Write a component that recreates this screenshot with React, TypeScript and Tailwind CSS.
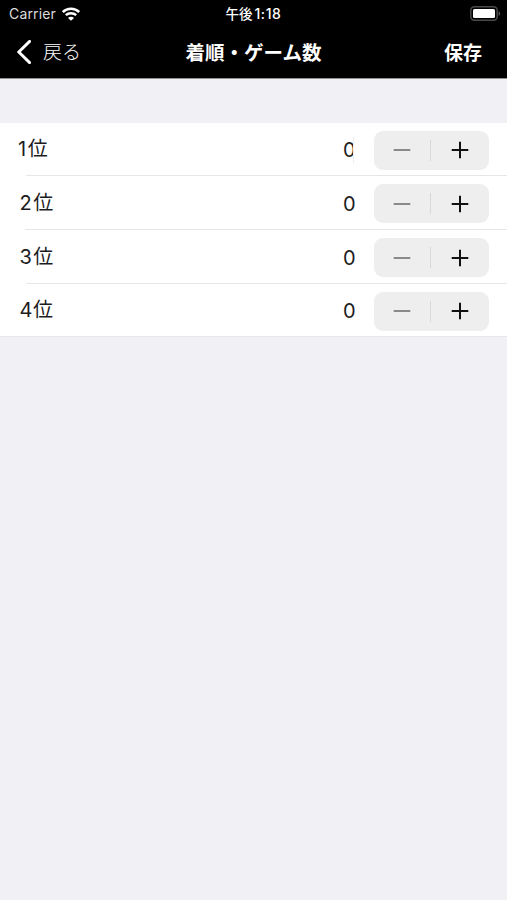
type Rank = {
  label: string;
  count: number;
  rowClass: string;
  labelClass: string;
  lineClass: string;
  clipped?: boolean;
};

const ranks: Rank[] = [
  { label: "1", count: 0, rowClass: "h-[53px]", labelClass: "pl-[18px] gap-[1.5px]", lineClass: "ml-[26px]", clipped: true },
  { label: "2", count: 0, rowClass: "h-[54px]", labelClass: "pl-[19.5px] gap-[1.5px]", lineClass: "ml-[25px]" },
  { label: "3", count: 0, rowClass: "h-[54px]", labelClass: "pl-[19.5px] gap-[1.5px]", lineClass: "ml-[26px]" },
  { label: "4", count: 0, rowClass: "h-[53px]", labelClass: "pl-[19.5px] gap-[0.5px]", lineClass: "ml-0" },
];

function StatusBar() {
  return (
    <div className="h-[26px] flex items-center justify-between pl-[9px] pr-[6px] text-white">
      <div className="w-[160px] flex items-center gap-[6px] pt-px">
        <span className="text-[14px] leading-[20px] tracking-[0.15px] text-[#dcdcdc]">Carrier</span>
        <svg className="w-[18px] h-[14px]" viewBox="0 0 18 14" fill="none" stroke="currentColor">
          <path d="M0.8 5C5.2 0.6 12.8 0.6 17.2 5" strokeWidth="2.6" />
          <path d="M3.8 8.2C6.6 5.5 11.4 5.5 14.2 8.2" strokeWidth="2.4" />
          <path d="M9 13.8L6 10.9C7.8 9.4 10.2 9.4 12 10.9Z" fill="currentColor" stroke="none" />
        </svg>
      </div>
      <div className="flex items-center gap-[2px] pr-[3px] pt-px font-medium leading-[20px]">
        <span className="text-[13.5px]">午後</span>
        <span className="text-[14px] tracking-[0.6px]">1:18</span>
      </div>
      <div className="w-[160px] flex justify-end">
        <svg className="w-[31px] h-[15px]" viewBox="0 0 31 15">
          <rect x="0.8" y="0.8" width="26.4" height="13.4" rx="3.6" fill="none" stroke="#4a4a4a" strokeWidth="1.5" />
          <rect x="3" y="3" width="22" height="9" rx="1.5" fill="#fff" />
          <path d="M28.6 5.2C30.6 6 30.6 9 28.6 9.8Z" fill="#5a5a5a" />
        </svg>
      </div>
    </div>
  );
}

function NavBar() {
  return (
    <div className="h-[53px] flex items-center justify-between pl-[17px] pr-[25px] border-b border-[#8e8e90] text-white">
      <button className="w-[120px] flex items-center gap-[12px]">
        <svg className="w-[14px] h-[24px]" viewBox="0 0 14 24" fill="none" stroke="currentColor">
          <path d="M12.6 1.4L1.8 12L12.6 22.6" strokeWidth="2.9" strokeLinecap="round" />
        </svg>
        <span className="pt-[2px] text-[19px] leading-[28px] font-light">戻る</span>
      </button>
      <h1 className="pt-[2px] text-[19.5px] leading-[28px] font-bold whitespace-nowrap">着順・ゲーム数</h1>
      <button className="w-[112px] pt-[3px] text-right text-[19px] leading-[28px] font-bold">保存</button>
    </div>
  );
}

function Stepper() {
  return (
    <div className="w-[115px] h-[39px] flex items-center rounded-[9px] bg-[#eeeeee]">
      <button className="w-[56px] flex justify-center text-[#8a8a8b]">
        <svg className="w-[18px] h-[18px]" viewBox="0 0 18 18" stroke="currentColor">
          <path d="M0.7 9H17.3" strokeWidth="2" />
        </svg>
      </button>
      <div className="w-px h-[21px] bg-[#d8d8da]" />
      <button className="w-[58px] flex justify-center text-[#111111]">
        <svg className="w-[18px] h-[18px]" viewBox="0 0 18 18" stroke="currentColor">
          <path d="M0.7 9H17.3M9 0.7V17.3" strokeWidth="2" />
        </svg>
      </button>
    </div>
  );
}

function RankRow({ rank }: { rank: Rank }) {
  return (
    <li className={`${rank.rowClass} flex flex-col`}>
      <div className="flex-1 flex items-center pt-[2px] pr-[18px] text-[#1c1c1e]">
        <div className={`${rank.labelClass} flex-1 flex items-center pb-[2px] leading-[28px]`}>
          <span className="text-[20px]">{rank.label}</span>
          <span className="text-[20px]">位</span>
        </div>
        <div className="relative w-[13px] mr-[18px] text-[20px] leading-[26px]">
          {rank.count}
          {/* edge of the number field covers the last pixels of the digit */}
          {rank.clipped && (
            <div className="absolute left-[10px] top-0 w-[4px] h-[26px] bg-white border-l border-[#eeeeee]" />
          )}
        </div>
        <Stepper />
      </div>
      <div className={`${rank.lineClass} h-px bg-[#e6e6e8]`} />
    </li>
  );
}

export default function App() {
  return (
    <div className="w-full h-[900px] overflow-hidden bg-[#f0f0f5] font-[Inter,'Noto_Sans_CJK_JP',sans-serif]">
      <header className="bg-black">
        <StatusBar />
        <NavBar />
      </header>

      <main className="pt-[44px]">
        <ul className="bg-white">
          {ranks.map((rank) => (
            <RankRow key={rank.label} rank={rank} />
          ))}
        </ul>
      </main>
    </div>
  );
}
